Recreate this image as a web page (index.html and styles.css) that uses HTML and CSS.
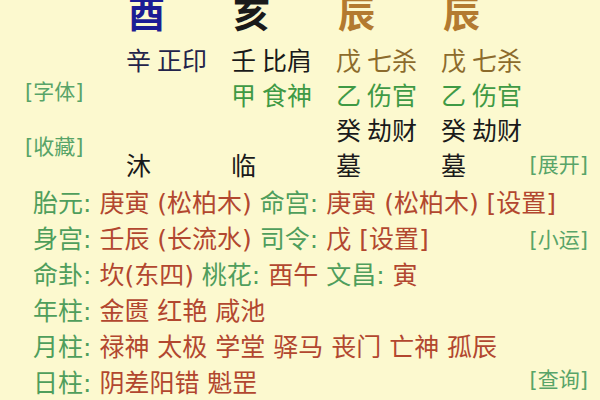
FILE: index.html
```html
<!DOCTYPE html>
<html lang="zh-CN">
<head>
<meta charset="utf-8">
<title>八字</title>
<link rel="stylesheet" href="styles.css">
</head>
<body>
<div class="page">
  <div class="top">
    <div class="side">
      <span class="link">[字体]</span>
      <span class="link">[收藏]</span>
    </div>
    <div class="pillars">
      <div class="big navy">酉</div>
      <div class="big black">亥</div>
      <div class="big brown">辰</div>
      <div class="big brown">辰</div>

      <div class="cell dnavy">辛 正印</div>
      <div class="cell black">壬 比肩</div>
      <div class="cell olive">戊 七杀</div>
      <div class="cell olive">戊 七杀</div>

      <div class="cell"></div>
      <div class="cell green">甲 食神</div>
      <div class="cell green">乙 伤官</div>
      <div class="cell green">乙 伤官</div>

      <div class="cell"></div>
      <div class="cell"></div>
      <div class="cell black">癸 劫财</div>
      <div class="cell black">癸 劫财</div>

      <div class="cell black">沐</div>
      <div class="cell black">临</div>
      <div class="cell black">墓</div>
      <div class="cell black">墓</div>
    </div>
    <div class="right">
      <span class="link">[展开]</span>
    </div>
  </div>
  <div class="info">
    <div class="row"><span><span class="lbl">胎元:</span> <span class="val">庚寅 (松柏木)</span> <span class="lbl">命宫:</span> <span class="val">庚寅 (松柏木) [设置]</span></span></div>
    <div class="row"><span><span class="lbl">身宫:</span> <span class="val">壬辰 (长流水)</span> <span class="lbl">司令:</span> <span class="val">戊 [设置]</span></span><span class="link">[小运]</span></div>
    <div class="row"><span><span class="lbl">命卦:</span> <span class="val">坎(东四)</span> <span class="lbl">桃花:</span> <span class="val">酉午</span> <span class="lbl">文昌:</span> <span class="val">寅</span></span></div>
    <div class="row"><span><span class="lbl">年柱:</span> <span class="val">金匮 红艳 咸池</span></span></div>
    <div class="row"><span><span class="lbl">月柱:</span> <span class="val">禄神 太极 学堂 驿马 丧门 亡神 孤辰</span></span></div>
    <div class="row"><span><span class="lbl">日柱:</span> <span class="val">阴差阳错 魁罡</span></span><span class="link up">[查询]</span></div>
  </div>
</div>
</body>
</html>
```

FILE: styles.css
```css
html, body {
  margin: 0;
  padding: 0;
  background: #fcf9cf;
}
body {
  width: 600px;
  height: 400px;
  overflow: hidden;
  font-family: "DejaVu Sans", "Noto Sans CJK SC", sans-serif;
}
.page {
  width: 600px;
  height: 400px;
}
.top {
  display: flex;
  height: 186px;
}
.side {
  flex: 0 0 126px;
  box-sizing: border-box;
  padding-left: 25px;
  padding-top: 80px;
  display: flex;
  flex-direction: column;
  gap: 31px;
}
.link {
  font-size: 21px;
  line-height: 24px;
  color: #58a468;
  white-space: nowrap;
}
.pillars {
  flex: 0 0 auto;
  display: grid;
  grid-template-columns: 105px 105px 105px auto;
  grid-template-rows: 44px repeat(4, 35px);
}
.big {
  font-size: 37px;
  font-weight: bold;
  line-height: 26px;
  padding-top: 3px;
  padding-left: 2px;
}
.cell {
  font-size: 25px;
  line-height: 35px;
  word-spacing: -2px;
  white-space: nowrap;
}
.right {
  flex: 1 1 auto;
  display: flex;
  flex-direction: column;
  justify-content: flex-end;
  align-items: flex-end;
  padding-right: 12px;
  padding-bottom: 3px;
}
.right .link {
  line-height: 35px;
}
.info {
  padding-left: 33px;
  padding-right: 12px;
}
.row {
  display: flex;
  justify-content: space-between;
  align-items: center;
  font-size: 25px;
  line-height: 36px;
  white-space: nowrap;
}
.row .up {
  margin-bottom: 8px;
}
.lbl { color: #4f9e5c; }
.val { color: #b2472f; }
.navy { color: #1c1c94; }
.dnavy { color: #23234a; }
.black { color: #1a1a1a; }
.brown { color: #b37a30; }
.olive { color: #8c6b2c; }
.green { color: #3f9a45; }
```
